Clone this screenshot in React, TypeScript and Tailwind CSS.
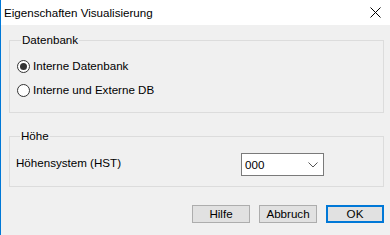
const Radio = ({ checked, label }: { checked?: boolean; label: string }) => (
  <div className="flex h-[24px] items-center gap-[3px]">
    <span className="flex h-[13px] w-[13px] items-center justify-center rounded-full border border-[#333333] bg-white">
      {checked && <span className="h-[7px] w-[7px] rounded-full bg-[#333333]" />}
    </span>
    <span>{label}</span>
  </div>
)

const Button = ({ label, primary }: { label: string; primary?: boolean }) => (
  <button
    className={
      primary
        ? 'h-[18px] w-[58px] border-2 border-[#0078d7] bg-[#e1e1e1] leading-none'
        : 'h-[18px] w-[58px] border border-[#adadad] bg-[#e1e1e1] leading-none'
    }
  >
    {label}
  </button>
)

export default function App() {
  return (
    <div className="flex h-[235px] w-[390px] flex-col border-l border-[#0078d7] font-['Liberation_Sans',Arial,sans-serif] text-[11.6px] text-black">
      <div className="flex h-[25px] items-center justify-between bg-white pl-[3px] pr-[9px]">
        <span>Eigenschaften Visualisierung</span>
        <svg width="11" height="11" viewBox="0 0 11 11" className="text-black">
          <path d="M0.5 0.5L10.5 10.5M10.5 0.5L0.5 10.5" stroke="currentColor" strokeWidth="1" />
        </svg>
      </div>
      <div className="flex flex-1 flex-col bg-[#f0f0f0] pl-[8px] pr-[6px] pt-[8px]">
        <fieldset className="h-[80px] border border-[#dcdcdc] pl-[7px]">
          <legend className="ml-[4px] px-[1px] leading-[14px]">Datenbank</legend>
          <div className="mt-[7px] flex flex-col">
            <Radio checked label="Interne Datenbank" />
            <Radio label="Interne und Externe DB" />
          </div>
        </fieldset>
        <fieldset className="mt-[16px] h-[58px] border border-[#dcdcdc] pl-[6px]">
          <legend className="ml-[4px] px-[1px] leading-[14px]">Höhe</legend>
          <div className="mt-[10px] flex items-start">
            <span className="mt-[1px] w-[225px]">Höhensystem (HST)</span>
            <div className="flex h-[23px] w-[83px] items-center justify-between border border-[#7a7a7a] bg-white pl-[3px] pr-[5px]">
              <span>000</span>
              <svg width="10" height="6" viewBox="0 0 10 6">
                <path d="M0.5 0.5L5 5L9.5 0.5" fill="none" stroke="#555555" strokeWidth="1" />
              </svg>
            </div>
          </div>
        </fieldset>
        <div className="mt-[18px] flex justify-end gap-[9px]">
          <Button label="Hilfe" />
          <Button label="Abbruch" />
          <Button label="OK" primary />
        </div>
      </div>
    </div>
  )
}
